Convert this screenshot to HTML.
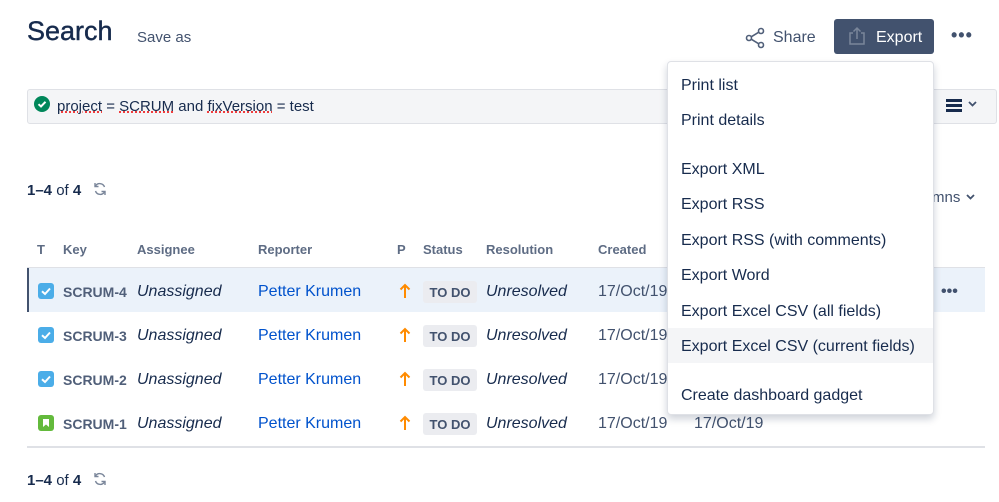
<!DOCTYPE html>
<html><head><meta charset="utf-8"><style>
*{margin:0;padding:0;box-sizing:border-box}
body{width:999px;height:502px;background:#fff;font-family:"Liberation Sans",sans-serif;color:#172b4d;position:relative;overflow:hidden}
.a{position:absolute;white-space:nowrap}
.row{position:absolute;left:27px;width:958px;height:44px}
.c{position:absolute;top:2px;line-height:44px;font-size:16px}
.key{color:#505f79;font-weight:bold;font-size:14px}
.it{font-style:italic}
.lnk{color:#0052cc}
.loz{position:absolute;top:13px;left:396px;width:54px;height:22px;background:#ebecf0;border-radius:3px;color:#42526e;font-weight:bold;font-size:13px;line-height:23px;text-align:center}
.chk{position:absolute;left:11px;top:15px;width:16px;height:16px;border-radius:3px;background:#4bade8}
.th{position:absolute;top:242px;font-size:13px;font-weight:bold;color:#5e6c84}
.menu{position:absolute;left:667px;top:61px;width:267px;height:354px;background:#fff;border:1px solid #dfe1e6;border-radius:4px;box-shadow:0 4px 8px rgba(9,30,66,.2)}
.mi{position:absolute;left:0;width:265px;height:35px;line-height:37px;padding-left:13px;font-size:16px;color:#172b4d}
.arr{position:absolute;left:372px;top:15px}
</style></head><body>
<div class="a" style="left:27px;top:16px;font-size:27px;color:#172b4d;-webkit-text-stroke:0.4px #172b4d">Search</div>
<div class="a" style="left:137px;top:29px;font-size:15px;color:#42526e">Save as</div>

<svg class="a" style="left:745px;top:27px" width="22" height="22" viewBox="0 0 22 22"><g fill="none" stroke="#505f79" stroke-width="1.6"><circle cx="16" cy="4" r="2.5"/><circle cx="4" cy="11" r="2.5"/><circle cx="16" cy="18" r="2.5"/><path d="M6.2 9.8 13.8 5.2M6.2 12.2 13.8 16.8"/></g></svg>
<div class="a" style="left:773px;top:29px;font-size:16px;color:#42526e">Share</div>
<div class="a" style="left:834px;top:19px;width:100px;height:35px;background:#42526e;border-radius:3px"></div>
<svg class="a" style="left:848px;top:26px" width="18" height="20" viewBox="0 0 18 20"><g fill="none" stroke="#7a869a" stroke-width="1.5"><path d="M5 7H2v11h14V7h-3M9 13V2M5.5 5.5 9 2l3.5 3.5"/></g></svg>
<div class="a" style="left:876px;top:29px;font-size:16px;color:#fff">Export</div>
<div class="a" style="left:951px;top:25px;font-size:18px;color:#42526e;letter-spacing:1px;font-weight:bold">•••</div>

<div class="a" style="left:27px;top:89px;width:970px;height:35px;background:#f4f5f7;border:1px solid #dfe1e6;border-radius:3px"></div>
<svg class="a" style="left:34px;top:96px" width="16" height="16" viewBox="0 0 16 16"><circle cx="8" cy="8" r="8" fill="#00875a"/><path d="M4.5 8.2 7 10.5 11.5 5.8" stroke="#fff" stroke-width="2" fill="none"/></svg>
<div class="a" style="left:57px;top:98px;font-size:15px;color:#172b4d"><span style="text-decoration:underline dotted #e00">project</span> = <span style="text-decoration:underline dotted #e00">SCRUM</span> and <span style="text-decoration:underline dotted #e00">fixVersion</span> = test</div>
<div class="a" style="left:946px;top:99px;width:16px;height:3px;background:#172b4d;box-shadow:0 5px 0 #172b4d,0 10px 0 #172b4d"></div>
<svg class="a" style="left:968px;top:101px" width="9" height="6" viewBox="0 0 9 6"><path d="M1 1l3.5 3.5L8 1" stroke="#42526e" stroke-width="1.8" fill="none"/></svg>

<div class="a" style="left:27px;top:182px;font-size:15px"><b>1–4</b> of <b>4</b></div>
<svg class="a" style="left:92px;top:181px" width="16" height="16" viewBox="0 0 16 16"><g fill="none" stroke="#7a869a" stroke-width="1.4"><path d="M12.5 6A5 5 0 0 0 3.5 5M3.5 10a5 5 0 0 0 9 1"/><path d="M3 2v3.5h3.5M13 14v-3.5H9.5"/></g></svg>
<div class="a" style="left:932px;top:189px;font-size:15px;color:#42526e">mns</div>
<svg class="a" style="left:966px;top:194px" width="9" height="6" viewBox="0 0 9 6"><path d="M1 1l3.5 3.5L8 1" stroke="#42526e" stroke-width="1.8" fill="none"/></svg>

<div class="th" style="left:37px">T</div><div class="th" style="left:63px">Key</div><div class="th" style="left:137px">Assignee</div><div class="th" style="left:258px">Reporter</div><div class="th" style="left:397px">P</div><div class="th" style="left:423px">Status</div><div class="th" style="left:486px">Resolution</div><div class="th" style="left:598px">Created</div>

<div class="a" style="left:27px;top:267px;width:958px;height:1px;background:#dfe1e6"></div>
<div class="row" style="top:268px;background:#ebf2fa;border-left:2px solid #42526e"></div>

<div class="row" style="top:268px"><div class="chk"></div><div class="c key" style="left:36px">SCRUM-4</div><div class="c it" style="left:110px">Unassigned</div><div class="c lnk" style="left:231px">Petter Krumen</div><svg class="arr" width="12" height="16" viewBox="0 0 12 16"><path d="M6 15V2M1.5 6.5 6 2l4.5 4.5" stroke="#ff8b00" stroke-width="2" fill="none"/></svg><div class="loz">TO DO</div><div class="c it" style="left:459px">Unresolved</div><div class="c" style="left:571px;color:#42526e">17/Oct/19</div><div class="c" style="left:914px;font-weight:bold;color:#42526e">•••</div></div>
<div class="row" style="top:312px"><div class="chk"></div><div class="c key" style="left:36px">SCRUM-3</div><div class="c it" style="left:110px">Unassigned</div><div class="c lnk" style="left:231px">Petter Krumen</div><svg class="arr" width="12" height="16" viewBox="0 0 12 16"><path d="M6 15V2M1.5 6.5 6 2l4.5 4.5" stroke="#ff8b00" stroke-width="2" fill="none"/></svg><div class="loz">TO DO</div><div class="c it" style="left:459px">Unresolved</div><div class="c" style="left:571px;color:#42526e">17/Oct/19</div></div>
<div class="row" style="top:356px"><div class="chk"></div><div class="c key" style="left:36px">SCRUM-2</div><div class="c it" style="left:110px">Unassigned</div><div class="c lnk" style="left:231px">Petter Krumen</div><svg class="arr" width="12" height="16" viewBox="0 0 12 16"><path d="M6 15V2M1.5 6.5 6 2l4.5 4.5" stroke="#ff8b00" stroke-width="2" fill="none"/></svg><div class="loz">TO DO</div><div class="c it" style="left:459px">Unresolved</div><div class="c" style="left:571px;color:#42526e">17/Oct/19</div></div>
<div class="row" style="top:400px"><div class="chk" style="background:#63ba3c"></div><div class="c key" style="left:36px">SCRUM-1</div><div class="c it" style="left:110px">Unassigned</div><div class="c lnk" style="left:231px">Petter Krumen</div><svg class="arr" width="12" height="16" viewBox="0 0 12 16"><path d="M6 15V2M1.5 6.5 6 2l4.5 4.5" stroke="#ff8b00" stroke-width="2" fill="none"/></svg><div class="loz">TO DO</div><div class="c it" style="left:459px">Unresolved</div><div class="c" style="left:571px;color:#42526e">17/Oct/19</div><div class="c" style="left:667px;color:#42526e">17/Oct/19</div></div>
<svg class="a" style="left:38px;top:283px" width="16" height="16" viewBox="0 0 16 16"><path d="M4 8.3 7 11 12 5.5" stroke="#fff" stroke-width="2" fill="none"/></svg>
<svg class="a" style="left:38px;top:327px" width="16" height="16" viewBox="0 0 16 16"><path d="M4 8.3 7 11 12 5.5" stroke="#fff" stroke-width="2" fill="none"/></svg>
<svg class="a" style="left:38px;top:371px" width="16" height="16" viewBox="0 0 16 16"><path d="M4 8.3 7 11 12 5.5" stroke="#fff" stroke-width="2" fill="none"/></svg>
<svg class="a" style="left:38px;top:415px" width="16" height="16" viewBox="0 0 16 16"><path d="M5 4h6v8l-3-2.5L5 12z" fill="#fff"/></svg>
<div class="a" style="left:27px;top:446px;width:958px;height:2px;background:#dfe1e6"></div>
<div class="a" style="left:27px;top:472px;font-size:15px"><b>1–4</b> of <b>4</b></div>
<svg class="a" style="left:92px;top:471px" width="16" height="16" viewBox="0 0 16 16"><g fill="none" stroke="#7a869a" stroke-width="1.4"><path d="M12.5 6A5 5 0 0 0 3.5 5M3.5 10a5 5 0 0 0 9 1"/><path d="M3 2v3.5h3.5M13 14v-3.5H9.5"/></g></svg>

<div class="menu">
<div class="mi" style="top:5px">Print list</div>
<div class="mi" style="top:40px">Print details</div>
<div class="mi" style="top:89px">Export XML</div>
<div class="mi" style="top:124px">Export RSS</div>
<div class="mi" style="top:160px">Export RSS (with comments)</div>
<div class="mi" style="top:195px">Export Word</div>
<div class="mi" style="top:231px">Export Excel CSV (all fields)</div>
<div class="mi" style="top:266px;background:#f4f5f7">Export Excel CSV (current fields)</div>
<div class="mi" style="top:315px">Create dashboard gadget</div>
</div>
</body></html>
